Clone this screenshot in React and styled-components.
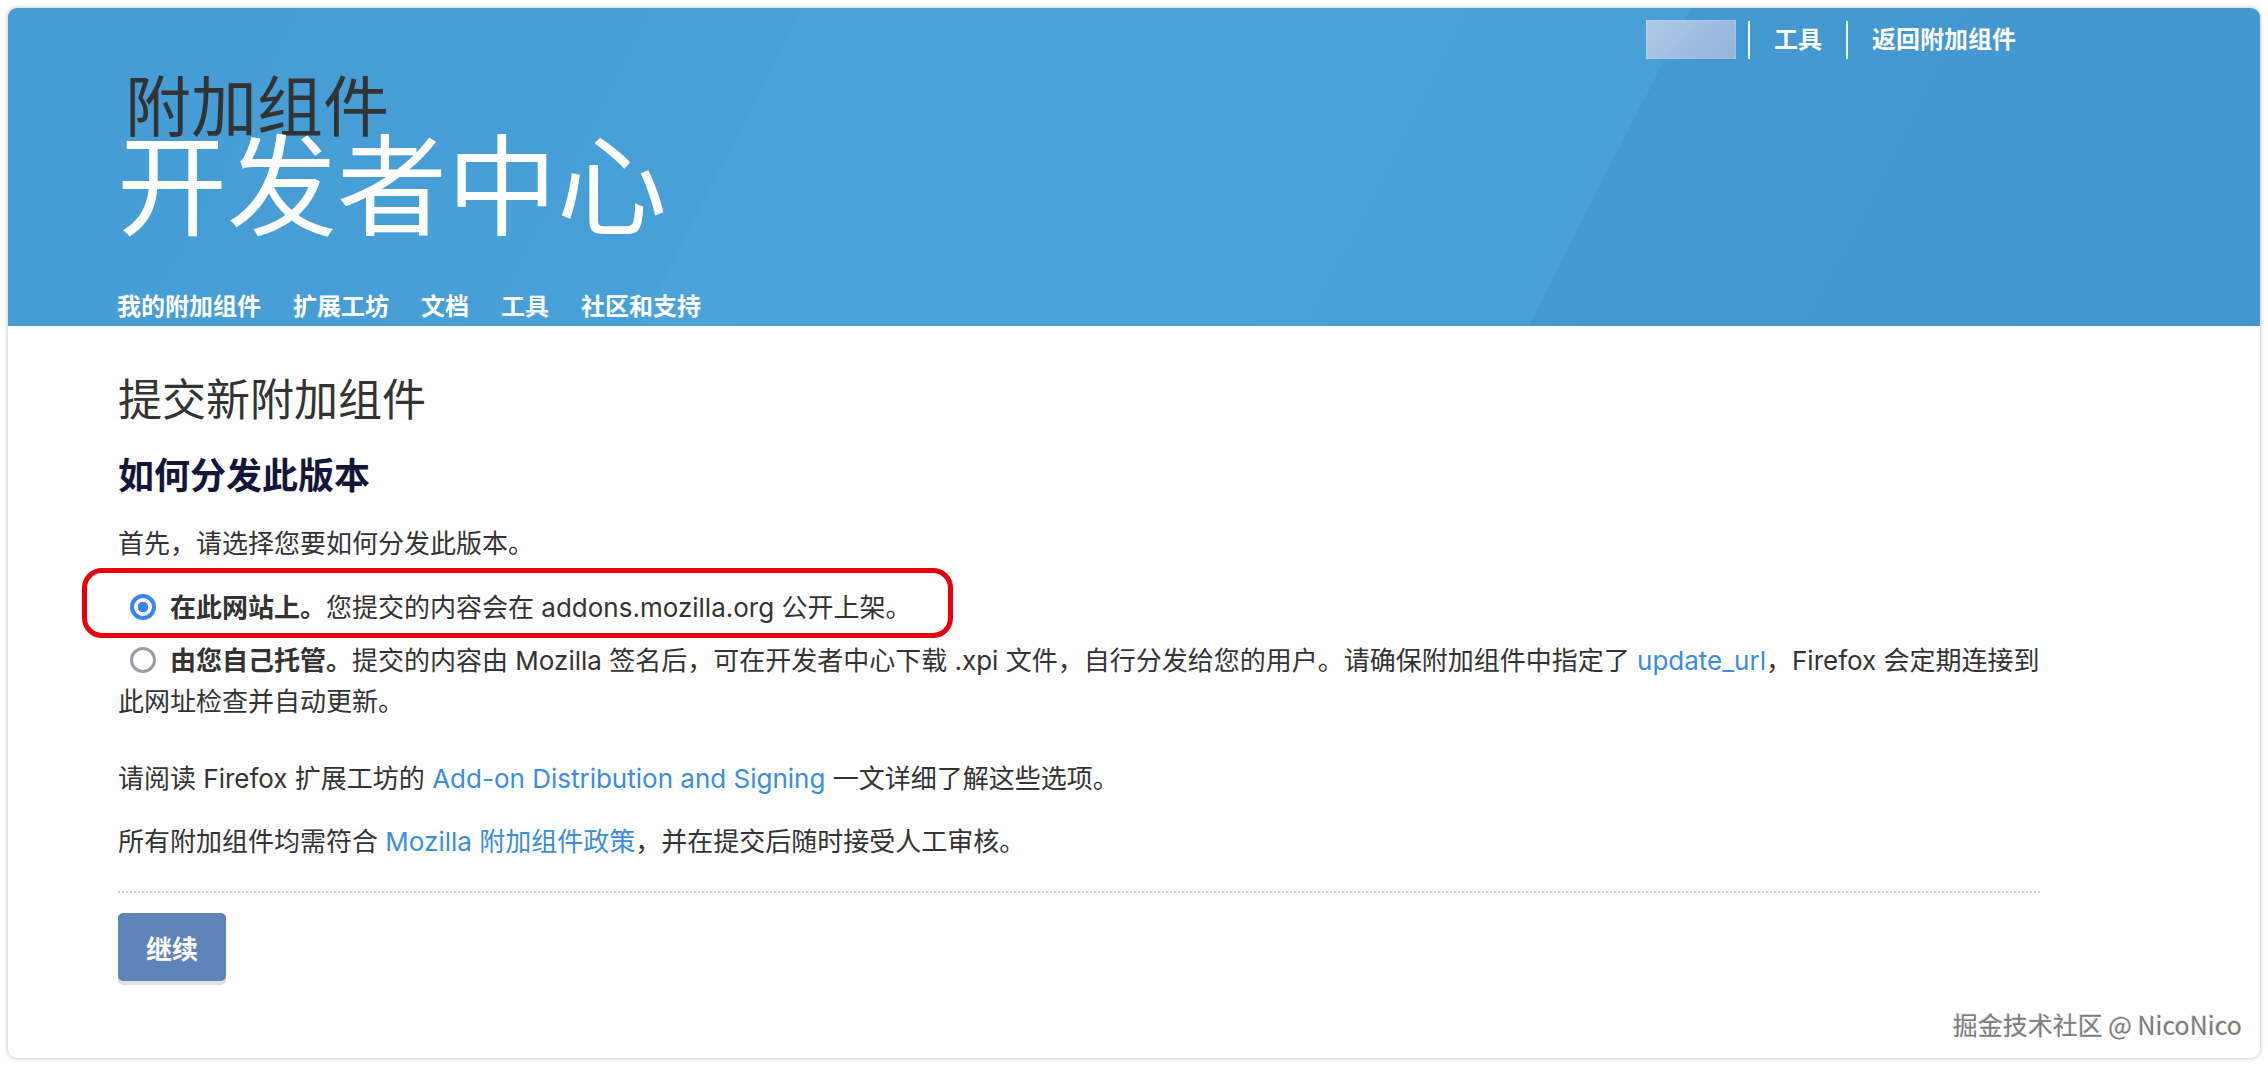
import React from "react";
import styled, { createGlobalStyle } from "styled-components";

const GlobalStyle = createGlobalStyle`
  html, body { margin: 0; padding: 0; background: #fff; }
  body { font-family: Inter, "Noto Sans CJK SC", sans-serif; color: #333; }
  * { box-sizing: border-box; }
`;

const Page = styled.div`
  position: relative;
  height: 100vh;
  padding: 8px;
  display: flex;
`;

const Window = styled.div`
  flex: 1;
  display: flex;
  flex-direction: column;
  border-radius: 9px;
  overflow: hidden;
  background: #fff;
  box-shadow: 0 0 5px rgba(0, 0, 0, 0.28);
`;

const Header = styled.header`
  height: 318px;
  display: flex;
  flex-direction: column;
  padding: 12px 244px 3px 109px;
  background: linear-gradient(
    117deg,
    #469cd4 0%,
    #48a0d8 32.9%,
    #4aa3db 32.9%,
    #48a0d8 69.7%,
    #4599d2 69.7%,
    #4397d0 100%
  );
`;

const TopBar = styled.div`
  display: flex;
  justify-content: flex-end;
  align-items: center;
  height: 39px;
`;

const UserBlur = styled.div`
  width: 90px;
  height: 39px;
  margin-right: 12px;
  background: linear-gradient(135deg, #b0c9e7 0%, #9dbbe0 60%, #92b5dc 100%);
  box-shadow: inset 0 0 2px rgba(255, 255, 255, 0.5);
`;

const Divider = styled.span`
  width: 2px;
  height: 38px;
  background: rgba(255, 255, 255, 0.92);
`;

const TopLink = styled.a`
  padding: ${(p) => (p.$last ? "0 0 0 24px" : "0 24px")};
  font-size: 24px;
  line-height: 39px;
  font-weight: 700;
  color: #fff;
  text-decoration: none;
`;

const Brand = styled.h1`
  margin: 15px 0 0;
  font-weight: 400;
  display: flex;
  flex-direction: column;
`;

const BrandSmall = styled.span`
  padding-left: 8px;
  font-size: 66px;
  line-height: 66px;
  color: #333;
`;

const BrandBig = styled.span`
  margin-top: -8px;
  font-size: 110px;
  line-height: 110px;
  color: #fff;
`;

const Nav = styled.nav`
  margin-top: auto;
  display: flex;
  gap: 32px;
`;

const NavLink = styled.a`
  font-size: 24px;
  line-height: 32px;
  font-weight: 700;
  color: #fff;
  text-decoration: none;
`;

const Main = styled.main`
  padding: 48px 220px 0 110px;
`;

const Title = styled.h2`
  margin: 0;
  font-size: 44px;
  line-height: 53px;
  font-weight: 400;
  color: #333;
`;

const SubTitle = styled.h3`
  margin: 26px 0 0;
  font-size: 36px;
  line-height: 46px;
  font-weight: 700;
  color: #14153a;
`;

const Text = styled.p`
  margin: ${(p) => p.$top}px 0 0;
  font-size: 26px;
  line-height: 41px;
  color: #333;
`;

const Options = styled.div`
  margin-top: 23px;
  display: flex;
  flex-direction: column;
  gap: 12px;
`;

const Option = styled.label`
  position: relative;
  display: block;
  font-size: 26px;
  line-height: 41px;
  color: #333;
`;

const Highlight = styled.span`
  position: absolute;
  left: -36px;
  top: -19px;
  width: 871px;
  height: 70px;
  border: 5px solid #e8000d;
  border-radius: 20px;
  pointer-events: none;
`;

const Radio = styled.input`
  appearance: none;
  display: inline-block;
  width: 26px;
  height: 26px;
  margin: 0 14px 0 12px;
  vertical-align: -3px;
  border-radius: 50%;
  border: ${(p) => (p.checked ? "4px solid #3a83f5" : "3px solid #9c9ca8")};
  background: ${(p) =>
    p.checked ? "radial-gradient(circle, #3a83f5 0 5px, #fff 5.6px)" : "#fff"};
`;

const Strong = styled.strong`
  font-weight: 700;
`;

const Link = styled.a`
  color: #3b8de0;
  text-decoration: none;
`;

const Rule = styled.hr`
  margin: 29px 0 0;
  border: 0;
  border-top: 2px dotted #c6d4d5;
`;

const Button = styled.button`
  margin-top: 20px;
  height: 68px;
  padding: 0 28px;
  border: 0;
  border-radius: 5px;
  background: #5f84b9;
  color: #fff;
  font-family: inherit;
  font-size: 26px;
  font-weight: 700;
  box-shadow: 0 4px 0 #dfe3e7;
`;

const Watermark = styled.div`
  position: absolute;
  right: 26px;
  bottom: 27px;
  font-family: "Noto Sans CJK SC", sans-serif;
  font-size: 25px;
  line-height: 30px;
  color: #7c7c7c;
  text-shadow: 1px 1px 0 #fff, -1px -1px 0 rgba(0, 0, 0, 0.12);
`;

export default function App() {
  return (
    <>
      <GlobalStyle />
      <Page>
        <Window>
          <Header>
            <TopBar>
              <UserBlur />
              <Divider />
              <TopLink href="#">工具</TopLink>
              <Divider />
              <TopLink href="#" $last>
                返回附加组件
              </TopLink>
            </TopBar>
            <Brand>
              <BrandSmall>附加组件</BrandSmall>
              <BrandBig>开发者中心</BrandBig>
            </Brand>
            <Nav>
              <NavLink href="#">我的附加组件</NavLink>
              <NavLink href="#">扩展工坊</NavLink>
              <NavLink href="#">文档</NavLink>
              <NavLink href="#">工具</NavLink>
              <NavLink href="#">社区和支持</NavLink>
            </Nav>
          </Header>
          <Main>
            <Title>提交新附加组件</Title>
            <SubTitle>如何分发此版本</SubTitle>
            <Text $top={24}>首先，请选择您要如何分发此版本。</Text>
            <Options>
              <Option>
                <Highlight />
                <Radio type="radio" name="channel" checked readOnly />
                <Strong>在此网站上。</Strong>您提交的内容会在 addons.mozilla.org 公开上架。
              </Option>
              <Option>
                <Radio type="radio" name="channel" checked={false} readOnly />
                <Strong>由您自己托管。</Strong>提交的内容由 Mozilla 签名后，可在开发者中心下载 .xpi 文件，自行分发给您的用户。请确保附加组件中指定了{" "}
                <Link href="#">update_url</Link>，Firefox 会定期连接到此网址检查并自动更新。
              </Option>
            </Options>
            <Text $top={36}>
              请阅读 Firefox 扩展工坊的 <Link href="#">Add-on Distribution and Signing</Link> 一文详细了解这些选项。
            </Text>
            <Text $top={22}>
              所有附加组件均需符合 <Link href="#">Mozilla 附加组件政策</Link>，并在提交后随时接受人工审核。
            </Text>
            <Rule />
            <Button type="button">继续</Button>
          </Main>
        </Window>
        <Watermark>掘金技术社区 @ NicoNico</Watermark>
      </Page>
    </>
  );
}
